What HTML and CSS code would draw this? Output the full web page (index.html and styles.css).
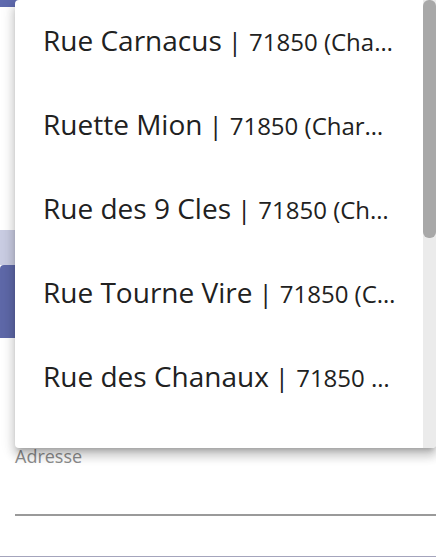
FILE: index.html
```html
<!DOCTYPE html>
<html lang="fr">
<head>
<meta charset="utf-8">
<title>Adresse</title>
<link rel="stylesheet" href="styles.css">
</head>
<body>
<div class="page">
  <div class="topbar"></div>
  <div class="card-area"></div>
  <div class="backdrop"></div>
  <div class="button-area"><div class="button"></div></div>
  <div class="form">
    <label class="field-label">Adresse</label>
    <div class="field-line"></div>
  </div>
  <div class="bottom-line"></div>

  <div class="menu">
    <ul class="options">
      <li class="option"><span class="street">Rue Carnacus</span><span class="sep">|</span><span class="city">71850 (Cha…</span></li>
      <li class="option"><span class="street">Ruette Mion</span><span class="sep">|</span><span class="city">71850 (Char…</span></li>
      <li class="option"><span class="street">Rue des 9 Cles</span><span class="sep">|</span><span class="city">71850 (Ch…</span></li>
      <li class="option"><span class="street">Rue Tourne Vire</span><span class="sep">|</span><span class="city">71850 (C…</span></li>
      <li class="option"><span class="street">Rue des Chanaux</span><span class="sep">|</span><span class="city">71850 …</span></li>
    </ul>
    <div class="scrollbar"><div class="thumb"></div></div>
  </div>
</div>
</body>
</html>
```
FILE: styles.css
```css
html, body {
  margin: 0;
  padding: 0;
  background: #ffffff;
  overflow: hidden;
}
.page {
  position: relative;
  width: 436px;
  height: 557px;
  display: flex;
  flex-direction: column;
  font-family: "Open Sans", "Noto Sans", sans-serif;
}
.topbar {
  height: 7px;
  background: #5f6aae;
  flex: none;
}
.card-area {
  height: 223px;
  background: #ffffff;
  flex: none;
}
.backdrop {
  height: 35px;
  background: #c9cce2;
  flex: none;
}
.button-area {
  height: 73px;
  flex: none;
  background: #ffffff;
}
.button {
  height: 100%;
  background: #5e68a8;
  border-top-left-radius: 4px;
}
.form {
  flex: none;
  padding: 0 0 0 15px;
  display: flex;
  flex-direction: column;
}
.field-label {
  margin-top: 106px;
  font-size: 18px;
  line-height: 24px;
  color: #8c8c8c;
}
.field-line {
  margin-top: 46px;
  height: 2px;
  background: #9a9a9a;
}
.bottom-line {
  position: absolute;
  left: 0;
  right: 0;
  bottom: 0;
  height: 1px;
  background: #a4a4bc;
}
.menu {
  position: absolute;
  left: 15px;
  right: 0;
  top: 0;
  height: 448px;
  background: #ffffff;
  border-radius: 4px 0 4px 4px;
  box-shadow: 0 5px 5px -3px rgba(0,0,0,.2), 0 8px 10px 1px rgba(0,0,0,.14), 0 3px 14px 2px rgba(0,0,0,.12);
  display: flex;
  overflow: hidden;
}
.options {
  list-style: none;
  margin: -2px 0 0 0;
  padding: 0;
  flex: 1;
  min-width: 0;
}
.option {
  height: 84px;
  padding: 0 28px;
  display: flex;
  align-items: baseline;
  color: #212121;
  white-space: nowrap;
  font-size: 22px;
  line-height: 84px;
}
.street {
  font-size: 28px;
}
.sep {
  font-size: 26px;
  margin: 0 7px 0 6px;
}
.city {
  font-size: 24px;
}
.scrollbar {
  width: 13px;
  flex: none;
  background: #ebebeb;
}
.thumb {
  height: 238px;
  background: #a8a8a8;
  border-radius: 6px;
}
```
